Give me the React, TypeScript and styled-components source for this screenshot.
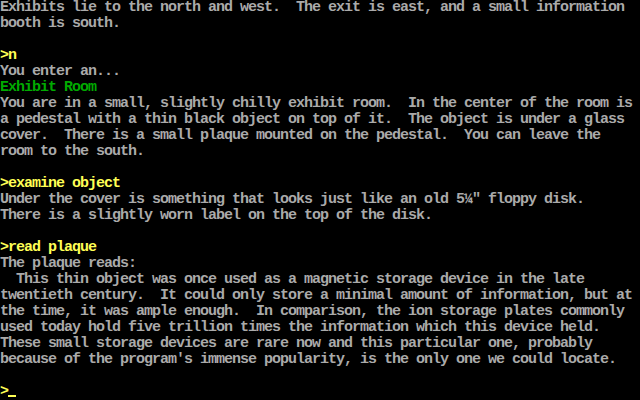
import React from "react";
import styled, { createGlobalStyle } from "styled-components";

const Global = createGlobalStyle`
  html, body { margin: 0; padding: 0; background: #000; }
  body { width: 640px; height: 400px; overflow: hidden; }
`;

const Screen = styled.div`
  width: 640px;
  height: 400px;
  background: #000;
  display: flex;
  flex-direction: column;
  font-family: "Liberation Mono", "DejaVu Sans Mono", monospace;
  font-size: 15px;
  font-weight: bold;
  letter-spacing: -1px;
  overflow: hidden;
`;

type Tone = "text" | "input" | "title";

const tones: Record<Tone, string> = {
  text: "#aaaaaa",
  input: "#ffff55",
  title: "#00aa00",
};

const Line = styled.div<{ $tone?: Tone }>`
  height: 16px;
  line-height: 16px;
  white-space: pre;
  color: ${(p) => tones[p.$tone ?? "text"]};
`;

const Cursor = styled.span`
  display: inline-block;
  width: 8px;
  height: 2px;
  background: #ffff55;
  vertical-align: -2px;
`;

const lines: [Tone, string][] = [
  ["text", "Exhibits lie to the north and west.  The exit is east, and a small information"],
  ["text", "booth is south."],
  ["text", ""],
  ["input", ">n"],
  ["text", "You enter an..."],
  ["title", "Exhibit Room"],
  ["text", "You are in a small, slightly chilly exhibit room.  In the center of the room is"],
  ["text", "a pedestal with a thin black object on top of it.  The object is under a glass"],
  ["text", "cover.  There is a small plaque mounted on the pedestal.  You can leave the"],
  ["text", "room to the south."],
  ["text", ""],
  ["input", ">examine object"],
  ["text", "Under the cover is something that looks just like an old 5\u00bc\" floppy disk."],
  ["text", "There is a slightly worn label on the top of the disk."],
  ["text", ""],
  ["input", ">read plaque"],
  ["text", "The plaque reads:"],
  ["text", "  This thin object was once used as a magnetic storage device in the late"],
  ["text", "twentieth century.  It could only store a minimal amount of information, but at"],
  ["text", "the time, it was ample enough.  In comparison, the ion storage plates commonly"],
  ["text", "used today hold five trillion times the information which this device held."],
  ["text", "These small storage devices are rare now and this particular one, probably"],
  ["text", "because of the program's immense popularity, is the only one we could locate."],
  ["text", ""],
];

export default function App() {
  return (
    <>
      <Global />
      <Screen>
        {lines.map(([tone, text], i) => (
          <Line key={i} $tone={tone}>
            {text}
          </Line>
        ))}
        <Line $tone="input">
          {">"}
          <Cursor />
        </Line>
      </Screen>
    </>
  );
}
